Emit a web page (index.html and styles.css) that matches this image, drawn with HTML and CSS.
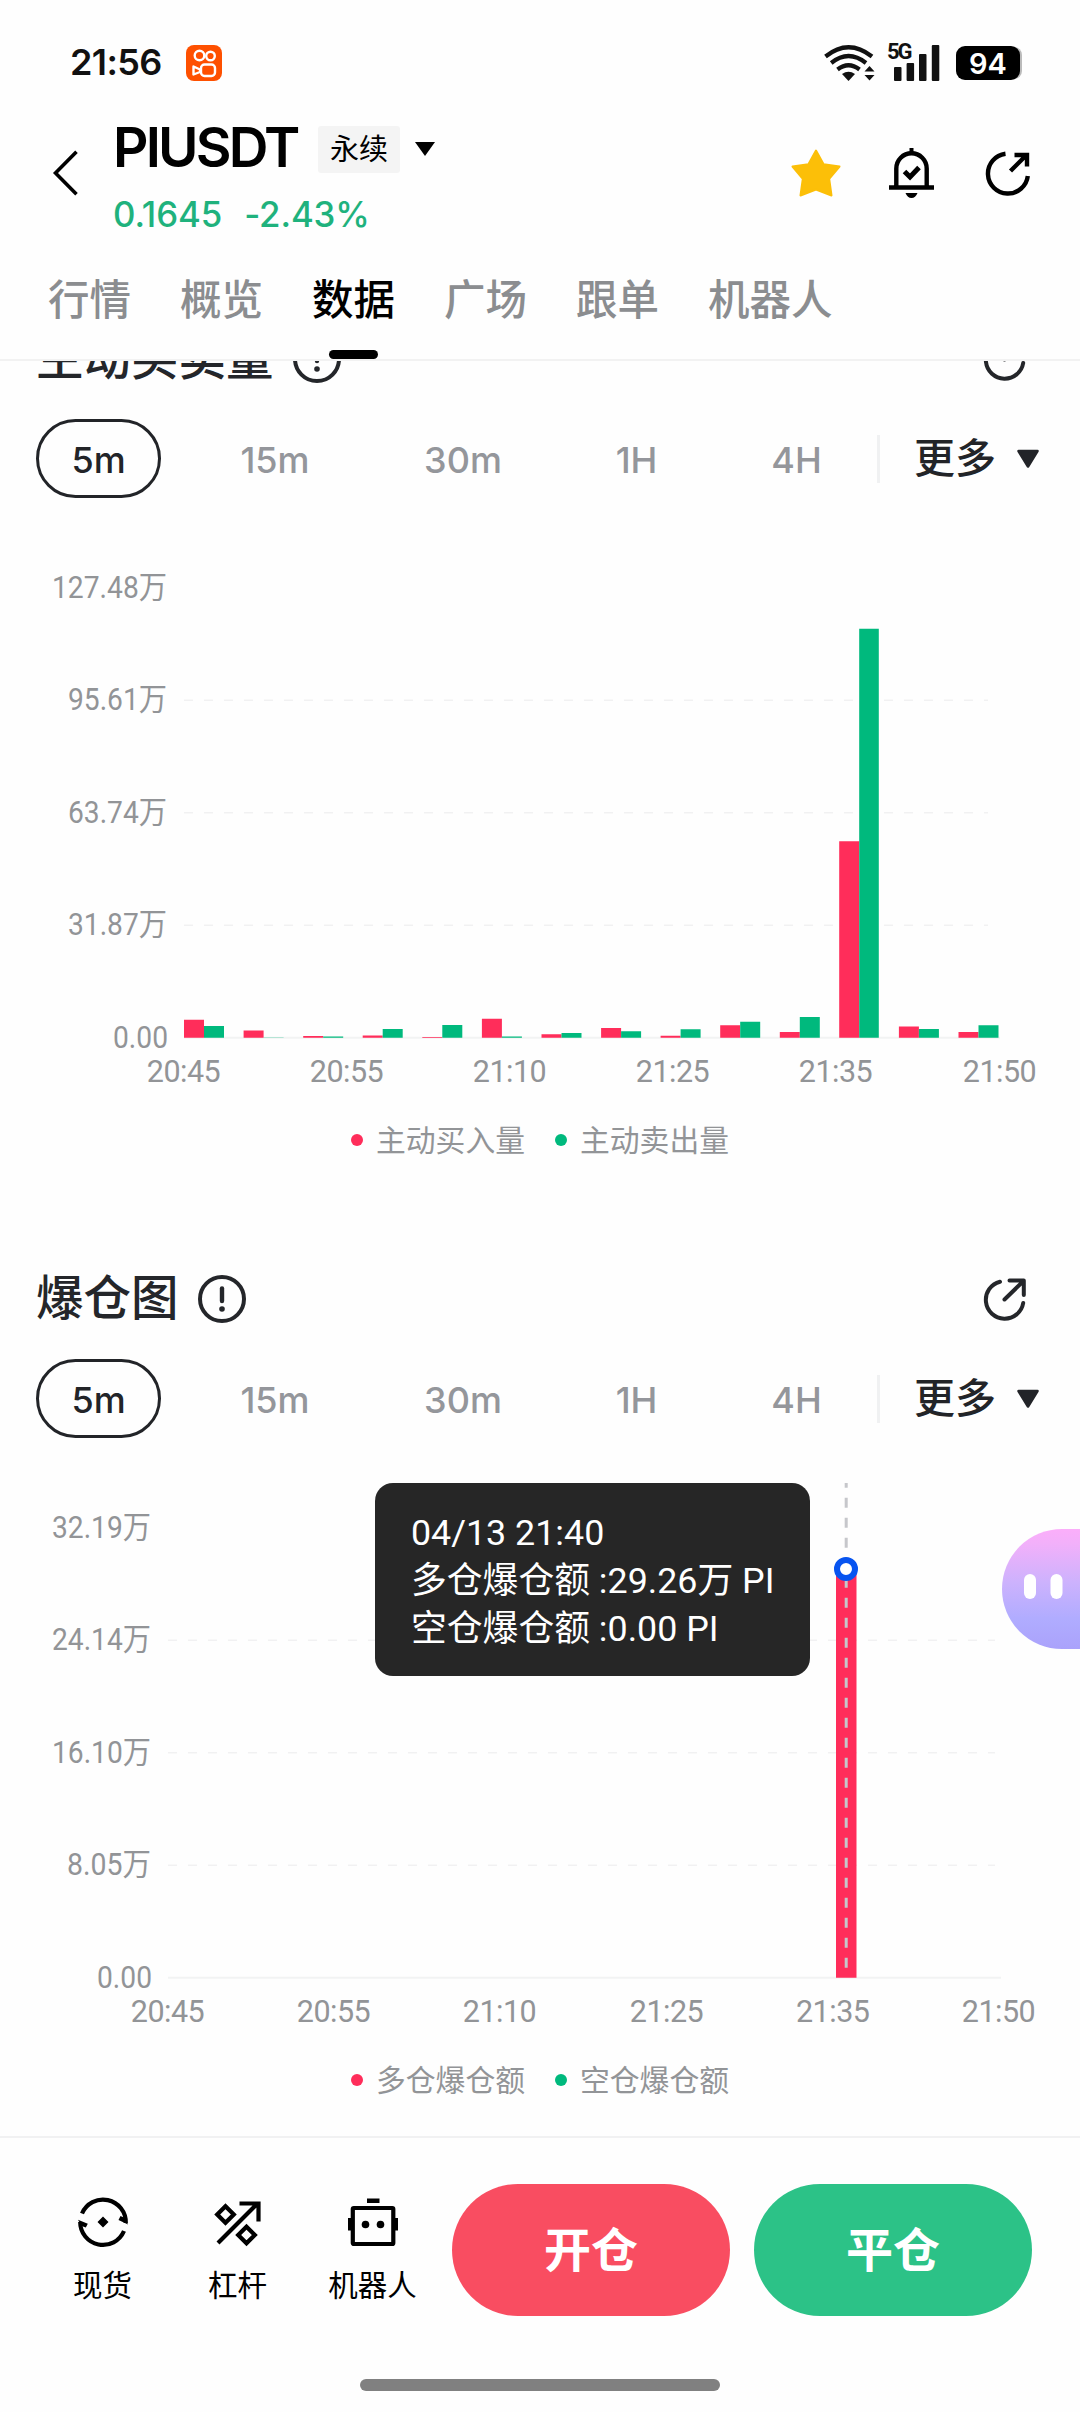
FILE: index.html
```html
<!DOCTYPE html>
<html lang="zh-CN">
<head>
<meta charset="utf-8">
<title>PIUSDT 永续 - 数据</title>
<link rel="stylesheet" href="styles.css">
</head>
<body>
<svg class="defs" width="0" height="0" aria-hidden="true">
  <symbol id="i-info" viewBox="0 0 48 48"><circle cx="24" cy="24" r="22" fill="none" stroke="currentColor" stroke-width="4"/><path d="M24 13.500V26" stroke="currentColor" stroke-width="4.400" stroke-linecap="round"/><circle cx="24" cy="34" r="2.800" fill="currentColor"/></symbol>
  <symbol id="i-export" viewBox="0 0 44 44"><g fill="none" stroke="currentColor" stroke-width="4" stroke-linecap="round" stroke-linejoin="round"><path d="M17 4.700A18.800 18.800 0 1 0 40.200 26"/><path d="M21.500 22.500L40.500 4M26.500 3.500H40.800V18"/></g></symbol>
  <symbol id="i-caret" viewBox="0 0 24 20"><path d="M2.500 2H21.500L12 17.500Z" fill="currentColor" stroke="currentColor" stroke-width="2.600" stroke-linejoin="round"/></symbol>
</svg>
<div class="screen">
  <header class="top">
    <div class="status">
      <span class="clock">21:56</span>
      <svg class="app-badge" viewBox="0 0 36 36"><rect width="36" height="36" rx="8" fill="#fe5000"/><g fill="none" stroke="#fff" stroke-width="2.400"><circle cx="13.500" cy="10.500" r="4.800"/><circle cx="24.500" cy="11" r="4.300"/><rect x="15" y="19.500" width="14" height="11.500" rx="3.500"/><path d="M7.500 21.500L14 24.500V27L7.500 29.500Z" stroke-linejoin="round"/></g></svg>
      <div class="signals">
        <svg class="wifi" viewBox="0 0 50 36"><g fill="none" stroke="#111" stroke-width="4.200"><path d="M1.500 11.500Q24.500 -7 48 11.500"/><path d="M7.200 18Q24.500 4 42 18"/><path d="M13.500 24.500Q24.500 16 35.500 24.500"/></g><path d="M18 29Q24.500 24.500 31 29L24.500 36Z" fill="#111"/><path d="M40.500 26.500L45.500 21L50.500 26.500ZM40.500 30L45.500 35.500L50.500 30Z" fill="#111"/></svg>
        <div class="cell"><span class="gen">5G</span><svg viewBox="0 0 46 36"><g fill="#111"><rect x="0" y="22" width="7.500" height="14" rx="1"/><rect x="12.600" y="18" width="7.500" height="18" rx="1"/><rect x="25" y="9" width="7.500" height="27" rx="1"/><rect x="37.800" y="0" width="7.500" height="36" rx="1"/></g></svg></div>
        <span class="battery">94</span>
      </div>
    </div>
    <div class="pair">
      <svg class="back" viewBox="0 0 26 46"><path d="M24.500 1.800L3.500 23L24.500 44.200" fill="none" stroke="#000" stroke-width="3.600"/></svg>
      <div class="pair-info">
        <div class="pair-name"><h1>PIUSDT</h1><span class="tag">永续</span><svg class="drop" viewBox="0 0 20 14"><path d="M0 0H20L10 14Z"/></svg></div>
        <div class="price"><span>0.1645</span><span>-2.43%</span></div>
      </div>
      <div class="actions">
        <svg width="50" height="48" viewBox="0 0 50 48"><path d="M25 1.500L32.600 15.200L48.500 17.600L38.200 29.800L40.500 46.500L25 40.500L9.500 46.500L11.800 29.800L1.500 17.600L17.400 15.200Z" fill="#fcbf08" stroke="#fcbf08" stroke-width="2" stroke-linejoin="round"/></svg>
        <svg width="45" height="50" viewBox="0 0 45 50"><g fill="none" stroke="#000" stroke-width="4.400"><path d="M0 39.500H45M7.300 39.500V20.500A15.200 15.200 0 0 1 37.700 20.500V39.500"/><path d="M15.500 23.500L21 29L30 19.500" stroke-width="5"/></g><path d="M20.500 0H24.500V5H20.500ZM16.500 45H28.500Q26.500 50 22.500 50Q18.500 50 16.500 45Z"/></svg>
        <svg width="44" height="46" viewBox="0 0 44 46"><g fill="none" stroke="#000" stroke-width="4.400"><path d="M19.500 3.700A20 20 0 1 0 41.800 26"/><path d="M24.500 21L40 5.500M28.500 5H41V16.500"/></g></svg>
      </div>
    </div>
    <nav class="tabs"><a>行情</a><a>概览</a><a class="on">数据</a><a>广场</a><a>跟单</a><a>机器人</a></nav>
  </header>

  <main class="scroll">
    <section class="panel">
      <div class="head"><h2>主动买卖量</h2><svg class="info"><use href="#i-info"/></svg><svg class="export"><use href="#i-export"/></svg></div>
      <div class="periods"><a class="on">5m</a><a>15m</a><a>30m</a><a>1H</a><a>4H</a><span class="more"><span>更多</span><svg><use href="#i-caret"/></svg></span></div>
      <svg class="chart" viewBox="0 0 1080 602">
        <g class="grid"><path d="M184 202.300H988M184 314.800H988M184 427.300H988"/></g>
        <path class="axis" d="M184 539.800H1000"/>
        <g class="label ylab">
          <text x="167" y="99.500" textLength="115" lengthAdjust="spacingAndGlyphs">127.48万</text><text x="167" y="212" textLength="99" lengthAdjust="spacingAndGlyphs">95.61万</text><text x="167" y="324.500" textLength="99" lengthAdjust="spacingAndGlyphs">63.74万</text><text x="167" y="437" textLength="99" lengthAdjust="spacingAndGlyphs">31.87万</text><text x="168" y="549.500" textLength="55" lengthAdjust="spacingAndGlyphs">0.00</text>
        </g>
        <g class="label xlab">
          <text x="183.500" y="584">20:45</text><text x="346.500" y="584">20:55</text><text x="509.500" y="584">21:10</text><text x="672.500" y="584">21:25</text><text x="835.500" y="584">21:35</text><text x="999.500" y="584">21:50</text>
        </g>
        <path class="buy" d="M184 539.800v-18h20v18zM243.600 539.800v-7.300h20v7.300zM303.200 539.800v-1.800h20v1.800zM362.700 539.800v-2.200h20v2.200zM422.300 539.800v-.9h20v.9zM481.900 539.800v-19h20v19zM541.500 539.800v-3.500h20v3.500zM601.100 539.800v-9.900h20v9.900zM660.600 539.800v-2h20v2zM720.200 539.800v-12.500h20v12.500zM779.800 539.800v-5.700h20v5.700zM839.200 539.800v-196.500h20v196.500zM898.900 539.800v-11.200h20v11.200zM958.500 539.800v-5.900h20v5.900z"/>
        <path class="sell" d="M204 539.800v-11.800h20v11.800zM263.600 539.800v-.2h20v.2zM323.200 539.800v-1.300h20v1.300zM382.700 539.800v-8.800h20v8.800zM442.300 539.800v-12.700h20v12.700zM501.900 539.800v-1.400h20v1.400zM561.500 539.800v-4.800h20v4.800zM621.100 539.800v-6.500h20v6.500zM680.600 539.800v-8.600h20v8.600zM740.200 539.800v-16h20v16zM799.800 539.800v-20.800h20v20.800zM859.200 539.800v-409h19.600v409zM918.900 539.800v-8.800h20v8.800zM978.500 539.800v-12.500h20v12.500z"/>
      </svg>
      <div class="legend"><span class="c-buy">主动买入量</span><span class="c-sell">主动卖出量</span></div>
    </section>

    <section class="panel">
      <div class="head"><h2>爆仓图</h2><svg class="info"><use href="#i-info"/></svg><svg class="export"><use href="#i-export"/></svg></div>
      <div class="periods"><a class="on">5m</a><a>15m</a><a>30m</a><a>1H</a><a>4H</a><span class="more"><span>更多</span><svg><use href="#i-caret"/></svg></span></div>
      <div class="plot">
        <svg class="chart" viewBox="0 0 1080 602">
          <g class="grid"><path d="M168 202.300H995M168 314.800H995M168 427.300H995"/></g>
          <path class="axis" d="M168 539.800H1001"/>
          <g class="label ylab">
            <text x="151" y="99.500" textLength="99" lengthAdjust="spacingAndGlyphs">32.19万</text><text x="151" y="212" textLength="99" lengthAdjust="spacingAndGlyphs">24.14万</text><text x="151" y="324.500" textLength="99" lengthAdjust="spacingAndGlyphs">16.10万</text><text x="151" y="437" textLength="84" lengthAdjust="spacingAndGlyphs">8.05万</text><text x="152" y="549.500" textLength="55" lengthAdjust="spacingAndGlyphs">0.00</text>
          </g>
          <g class="label xlab">
            <text x="167.500" y="584">20:45</text><text x="333.500" y="584">20:55</text><text x="499.500" y="584">21:10</text><text x="666.500" y="584">21:25</text><text x="832.700" y="584">21:35</text><text x="998.500" y="584">21:50</text>
          </g>
          <path class="buy" d="M836 539.800V131h20.500V539.800Z"/>
          <path d="M846.200 45V539.800" stroke="#c6c7cb" stroke-width="3" stroke-dasharray="10 10" stroke-dashoffset="5.300"/>
          <circle cx="846" cy="131" r="9" fill="#fff" stroke="#0754f0" stroke-width="6"/>
        </svg>
        <div class="tip"><p>04/13 21:40</p><p>多仓爆仓额 :29.26万 PI</p><p>空仓爆仓额 :0.00 PI</p></div>
        <svg class="bot" viewBox="0 0 78 120"><defs><linearGradient id="bot-skin" x1="0" y1="0" x2="0" y2="1"><stop offset="0" stop-color="#fbaefa"/><stop offset=".12" stop-color="#f2b0fa"/><stop offset=".45" stop-color="#ccb2fd"/><stop offset=".75" stop-color="#b0acff"/><stop offset="1" stop-color="#aaa2fb"/></linearGradient></defs><path d="M78 0H60A60 60 0 0 0 60 120H78Z" fill="url(#bot-skin)"/><rect x="22" y="45" width="12" height="25" rx="6" fill="#fff"/><rect x="48.500" y="45" width="12" height="25" rx="6" fill="#fff"/></svg>
      </div>
      <div class="legend"><span class="c-buy">多仓爆仓额</span><span class="c-sell">空仓爆仓额</span></div>
    </section>
  </main>

  <footer class="dock">
    <div class="dock-row">
      <a class="tool"><svg viewBox="0 0 50 50"><g fill="none" stroke="#000" stroke-width="4.200"><path d="M4 16.500A22.800 22.800 0 0 1 47.800 26"/><path d="M2.200 25A22.800 22.800 0 0 0 46 34"/></g><path d="M50 27.500L40.500 23L42.500 19L47 21ZM0 22.800L9.800 26.800L7.800 30.500L3.500 29ZM25 19.500L30.500 25L25 30.500L19.500 25Z"/></svg>现货</a>
      <a class="tool"><svg viewBox="0 0 50 50"><g fill="none" stroke="#000" stroke-width="4.200"><path d="M5 46L44 7M26.500 6.500H45.500V24.500"/><path d="M12.500 9.200L20.800 17.500L12.500 25.800L4.200 17.500ZM33.500 29.700L41.800 38L33.500 46.300L25.200 38Z"/></g></svg>杠杆</a>
      <a class="tool"><svg viewBox="0 0 50 50"><rect x="4.800" y="11" width="40.500" height="36" fill="none" stroke="#000" stroke-width="4.200" rx="1"/><path d="M19 1.500H31.500V6H19ZM0 21H4V33.500H0ZM46 21H50V33.500H46Z"/><circle cx="17.500" cy="27.500" r="3.800"/><circle cx="32.500" cy="27.500" r="3.800"/></svg>机器人</a>
      <a class="cta open">开仓</a>
      <a class="cta close">平仓</a>
    </div>
    <div class="home"></div>
  </footer>
</div>
</body>
</html>
```
FILE: styles.css
```css
* { box-sizing: border-box; margin: 0; padding: 0; }
body { background: #fefefe; font-family: Inter, "Noto Sans CJK SC", sans-serif; color: #000; }
.defs { position: absolute; }
svg { display: block; flex: none; overflow: visible; }
.screen { width: 1080px; height: 2412px; display: flex; flex-direction: column; overflow: hidden; }

.top { height: 361px; border-bottom: 2px solid #f2f2f2; display: flex; flex-direction: column; flex: none; }
.status { height: 124px; padding: 1px 58px 0 70px; display: flex; align-items: center; flex: none; }
.clock { font-size: 36px; font-weight: 600; letter-spacing: -.6px; line-height: 44px; padding-bottom: 2px; width: 116px; color: #111; }
.app-badge { width: 36px; height: 36px; }
.signals { margin-left: auto; display: flex; align-items: center; }
.wifi { width: 50px; height: 36px; }
.cell { width: 46px; height: 36px; margin: 0 16px 0 20px; position: relative; }
.cell svg { width: 46px; height: 36px; }
.gen { position: absolute; left: -7px; top: -4px; font: 700 22px/22px Roboto, sans-serif; letter-spacing: -2px; color: #111; }
.battery { width: 64px; height: 34px; margin-right: 2px; border-radius: 9px; background: #000; color: #fff; font-size: 29px; font-weight: 600; line-height: 35px; text-align: center; box-shadow: 3px 0 0 -1px #bbb; }

.pair { height: 134px; display: flex; padding: 0 50px 0 52px; flex: none; }
.back { width: 26px; height: 46px; margin-top: 26px; }
.pair-info { margin-left: 35px; }
.pair-name { display: flex; align-items: center; height: 50px; }
h1 { width: 205px; font-size: 55px; line-height: 50px; font-weight: 600; letter-spacing: -2.800px; white-space: nowrap; padding-bottom: 5px; height: 55px; }
.tag { width: 82px; height: 47px; background: #f4f4f4; font-size: 29px; line-height: 47px; text-align: center; border-radius: 3px; }
.drop { width: 20px; height: 14px; margin-left: 15px; }
.price { display: flex; gap: 22px; color: #1fb27d; font-size: 34.800px; letter-spacing: -.1px; font-weight: 500; line-height: 40px; margin-top: 20px; }
.actions { margin-left: auto; display: flex; align-items: center; height: 98px; gap: 50px; }
.actions svg:nth-child(2) { margin: 0 2px 0 -2px; }

.tabs { display: flex; gap: 49px; padding-left: 48px; height: 101px; font-size: 41.500px; line-height: 85px; color: #8b8d90; font-weight: 500; }
.tabs .on { color: #000; position: relative; }
.tabs .on::after { content: ""; position: absolute; left: 17px; top: 92px; width: 49px; height: 9px; border-radius: 5px; background: #000; z-index: 2; }

.scroll { height: 1775px; overflow: hidden; flex: none; }
.panel { height: 940px; color: #24262a; }
.panel:first-child { margin-top: -32px; }
.head { display: flex; align-items: center; height: 60px; padding: 0 53px 0 36px; }
h2 { font-size: 47.500px; line-height: 58px; height: 60px; font-weight: 500; }
.info { width: 48px; height: 48px; margin-left: 19px; }
.export { width: 44px; height: 44px; margin-left: auto; }
.periods { height: 79px; margin-top: 30px; display: grid; grid-template-rows: 79px; grid-template-columns: 125px 228px 148px 199px 121px 1fr; padding-left: 36px; align-items: center; text-align: center; font-size: 36px; font-weight: 500; line-height: 82px; color: #94969b; }
.periods a:not(.on) { height: 79px; }
.periods .on { height: 79px; border: 3px solid #222428; border-radius: 40px; line-height: 77px; color: #222428; }
.more { display: flex; align-items: center; border-left: 3px solid #f0f1f2; height: 48px; line-height: 48px; padding-left: 34px; margin-left: 20px; font-size: 41px; color: #222428; }
.more span { padding-bottom: 1px; }
.more svg { width: 24px; height: 20px; margin-left: 20px; }

.plot { position: relative; }
.chart { width: 1080px; height: 602px; }
.grid { stroke: #f1f1f2; stroke-width: 1.500px; stroke-dasharray: 9 11; fill: none; }
.axis { stroke: #f2f3f3; stroke-width: 2px; }
.label { font-family: Roboto, "Noto Sans CJK SC", sans-serif; font-size: 30.500px; fill: #929497; }
.ylab { text-anchor: end; }
.xlab { text-anchor: middle; letter-spacing: -.5px; }
.buy { fill: #ff2d5a; }
.sell { fill: #00b97d; }
.tip { position: absolute; left: 375px; top: 45px; width: 435px; height: 193px; padding: 26px 36px; border-radius: 18px; background: #262626; color: #fff; font: 35.800px/48px Roboto, "Noto Sans CJK SC", sans-serif; white-space: nowrap; }
.bot { position: absolute; left: 1002px; top: 91px; width: 78px; height: 120px; }
.legend { display: flex; justify-content: center; gap: 30px; margin-top: 19px; height: 42px; line-height: 42px; font-size: 29.800px; color: #929497; }
.legend span { display: flex; align-items: center; }
.legend span::before { content: ""; width: 12px; height: 12px; margin: 0 13px 1px 0; border-radius: 50%; background: #ff2d5a; }
.legend .c-sell::before { background: #00b97d; }

.dock { flex: 1; border-top: 2px solid #f1f1f2; display: flex; flex-direction: column; align-items: center; }
.dock-row { display: flex; width: 1080px; padding: 46px 48px 0 35px; height: 241px; }
.tool { width: 135px; display: flex; flex-direction: column; align-items: center; font-size: 29.500px; line-height: 40px; padding-top: 13px; }
.tool svg { width: 50px; height: 50px; margin-bottom: 18px; }
.cta { width: 278px; height: 132px; border-radius: 66px; color: #fff; font-size: 47px; font-weight: 700; line-height: 131px; text-align: center; }
.open { margin-left: 12px; background: #f94d61; }
.close { margin-left: 24px; background: #2cc287; }
.home { width: 360px; height: 12px; border-radius: 6px; background: #808080; }
```
